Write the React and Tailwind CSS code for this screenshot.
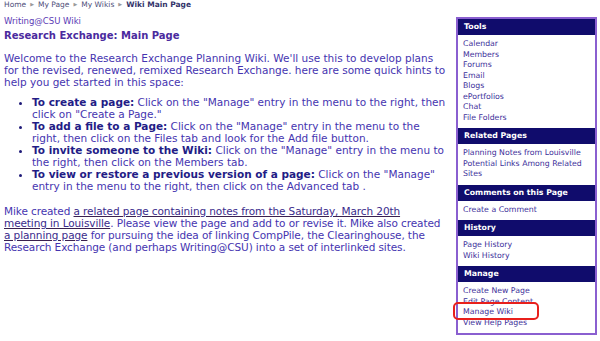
import React from "react";

const Arrow = () => (
  <span className="inline-block mx-[4px] align-middle text-[#9a9a9a] text-[5px] leading-none relative -top-[1px]">▶</span>
);

const Section = ({ title, items }) => (
  <div>
    <div className="h-[16px] bg-[#100c6c] text-white font-bold text-[7.8px] leading-[16px] pl-[6px]">{title}</div>
    <div className="pt-[4px] pb-[5px] pl-[5px] text-[7.8px] leading-[10.5px] text-[#3d2f9a]">
      {items.map((it) => (
        <div key={it}>{it}</div>
      ))}
    </div>
  </div>
);

export default function App() {
  return (
    <div className="w-[600px] h-[341px] bg-white relative overflow-hidden" style={{ fontFamily: '"DejaVu Sans", Verdana, sans-serif' }}>
      <div className="flex">
        <div className="w-[456px] shrink-0 pl-[4px] pr-[10px]">
          <div className="text-[7.5px] leading-[10px] pt-[0px] text-[#4f4f7a] flex items-center">
            <span>Home</span><Arrow /><span>My Page</span><Arrow /><span>My Wikis</span><Arrow /><span className="font-bold text-[#33336a]">Wiki Main Page</span>
          </div>
          <div className="mt-[6px] text-[8.5px] leading-[11px] text-[#5a3ab5]">Writing@CSU Wiki</div>
          <div className="mt-[2px] text-[10px] leading-[13px] font-bold text-[#4a2a9e]">Research Exchange: Main Page</div>
          <div className="text-[10.5px] leading-[12px] text-[#4534b0]">
            <p className="mt-[9.5px]">Welcome to the Research Exchange Planning Wiki. We'll use this to develop plans for the revised, renewed, remixed Research Exchange. here are some quick hints to help you get started in this space:</p>
            <ul className="mt-[8.5px] pl-[28px] list-disc marker:text-[#1f1a78]">
              <li><b className="text-[#231c86]">To create a page:</b> Click on the "Manage" entry in the menu to the right, then click on "Create a Page."</li>
              <li><b className="text-[#231c86]">To add a file to a Page:</b> Click on the "Manage" entry in the menu to the right, then click on the Files tab and look for the Add file button.</li>
              <li><b className="text-[#231c86]">To invite someone to the Wiki:</b> Click on the "Manage" entry in the menu to the right, then click on the Members tab.</li>
              <li><b className="text-[#231c86]">To view or restore a previous version of a page:</b> Click on the "Manage" entry in the menu to the right, then click on the Advanced tab .</li>
            </ul>
            <p className="mt-[13px] tracking-[-0.1px]">Mike created <span className="underline text-[#3a2b8c] decoration-[#3a2050]">a related page containing notes from the Saturday, March 20th meeting in Louisville</span>. Please view the page and add to or revise it. Mike also created <span className="underline text-[#3a2b8c] decoration-[#3a2050]">a planning page</span> for pursuing the idea of linking CompPile, the Clearinghouse, the Research Exchange (and perhaps Writing@CSU) into a set of interlinked sites.</p>
          </div>
        </div>
        <div className="w-[141px] mt-[17px] border-2 border-[#8a5fd0] self-start">
          <Section title="Tools" items={["Calendar", "Members", "Forums", "Email", "Blogs", "ePortfolios", "Chat", "File Folders"]} />
          <Section title="Related Pages" items={["Planning Notes from Louisville", "Potential Links Among Related Sites"]} />
          <Section title="Comments on this Page" items={["Create a Comment"]} />
          <Section title="History" items={["Page History", "Wiki History"]} />
          <Section title="Manage" items={["Create New Page", "Edit Page Content", "Manage Wiki", "View Help Pages"]} />
        </div>
      </div>
      <div className="absolute left-[453px] top-[302px] w-[86px] h-[18px] border-2 border-[#e8201c] rounded-[5px]" />
    </div>
  );
}
